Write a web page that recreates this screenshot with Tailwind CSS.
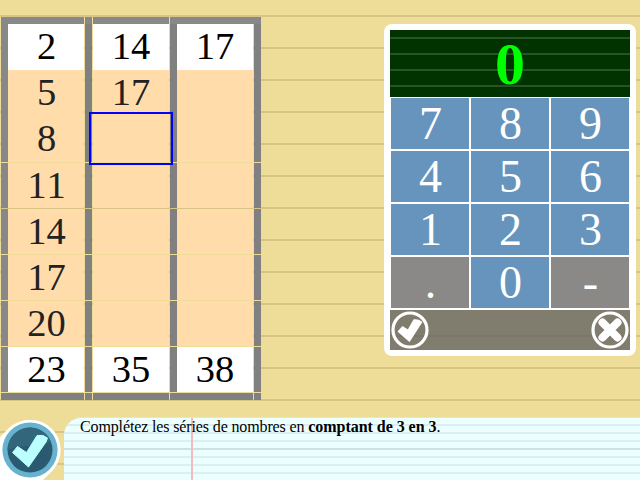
<!DOCTYPE html>
<html lang="fr">
<head>
<meta charset="utf-8">
<title>Séries de nombres</title>
<script src="https://cdn.jsdelivr.net/npm/@tailwindcss/browser@4"></script>
</head>
<body class="w-[640px] h-[480px] overflow-hidden bg-[#eedd99] bg-[repeating-linear-gradient(to_bottom,transparent_0px,transparent_15px,#d8c586_15px,#d8c586_17px,transparent_17px,transparent_32px)] font-['Liberation_Serif',serif] [font-kerning:none]">
<div class="relative w-[640px] h-[480px] flex flex-col">
  <main class="h-[417px] flex justify-between">
    <div id="grid" class="mt-[17px] ml-px flex flex-col w-[260px] text-[38.500px] leading-[45px] text-center">
      <div class="flex h-[7px]"><div class="w-[83px] bg-[#888]"></div><div class="ml-px w-[7px] bg-[#888]"></div><div class="ml-px w-[76px] bg-[#888]"></div><div class="ml-px w-[83px] bg-[#888]"></div><div class="w-[8px] bg-[#888]"></div></div>
    </div>
    <section class="mt-6 mr-1 w-[252px] h-[332px] p-1.5 rounded-lg bg-white flex flex-col">
      <div class="h-[67px] bg-[#003300] bg-[repeating-linear-gradient(to_bottom,transparent_0px,transparent_7px,#285228_7px,#285228_9px,transparent_9px,transparent_16px)] text-[#00ff00] font-bold text-[60px] leading-[69px] text-center">0</div>
      <div id="keys" class="mt-px px-px grid grid-cols-3 gap-0.5 text-white text-[46px] leading-[52px] text-center"></div>
      <div class="mt-0.5 h-10 px-px bg-[#807c6e] bg-[linear-gradient(to_bottom,transparent_25px,#7b7768_25px,#7b7768_27px,transparent_27px)] flex justify-between items-center">
        <svg class="size-[38px]" viewBox="0 0 38 38"><circle cx="19" cy="19" r="17" fill="none" stroke="#fff" stroke-width="3.200"/><path d="M7.500 20.500L11.500 16L17 19.500L23 9Q27 8.500 30.500 11L18.300 30z" fill="#fff" stroke="#fff" stroke-width="1.500" stroke-linejoin="round"/></svg>
        <svg class="size-[38px]" viewBox="0 0 38 38"><circle cx="19" cy="19" r="17" fill="none" stroke="#fff" stroke-width="3.200"/><path d="M11.500 11.500l15 15M26.500 11.500l-15 15" stroke="#fff" stroke-width="8" stroke-linecap="round"/></svg>
      </div>
    </section>
  </main>
  <footer class="flex h-[63px]">
    <svg class="w-16 h-[63px] shrink-0" viewBox="0 417 64 63"><path d="M0 437L9 428Q18 420 30 420A30 30 0 0 1 52 471L43 480H0z" fill="#fff"/><circle cx="30" cy="450" r="30" fill="#fff"/><circle cx="30" cy="450" r="27.600" fill="#66b2cf"/><circle cx="30" cy="450" r="22.500" fill="#295a70"/><path d="M7.500 450A22.500 22.500 0 0 1 51 442Q40 445 28 446T7.500 450z" fill="#31667b"/><path d="M12.500 452.500L17.500 446.500L26.500 452.500L37 435.500Q43 434 47.500 438L46 442L28.500 467z" fill="#bff" stroke="#bff" stroke-linejoin="round"/></svg>
    <div class="relative flex-1 rounded-tl-[18px] overflow-hidden border-t border-[#dde8d8] bg-[#ecffff] bg-[repeating-linear-gradient(to_bottom,transparent_0px,transparent_6px,#dbeef2_6px,#dbeef2_8px)]">
      <div class="absolute left-0 right-0 top-[30px] h-0.5 bg-[#cfe0e2]"></div>
      <div class="absolute left-[127px] top-0 bottom-0 w-0.5 bg-[#f5bcbe]"></div>
      <p class="relative pl-4 text-[16px] leading-[18px] text-black tracking-[-0.130px]">Complétez les séries de nombres en <b class="tracking-[-0.040px]">comptant de 3 en 3</b>.</p>
    </div>
  </footer>
  <div class="absolute left-[89px] top-[112px] w-[84px] h-[53px] border-2 border-[#0000ff]"></div>
</div>
<script>
const rows = [[2,14,17],[5,17,''],[8,'',''],[11,'',''],[14,'',''],[17,'',''],[20,'',''],[23,35,38]];
document.getElementById('grid').insertAdjacentHTML('beforeend', rows.map((r, i) => {
  const h = i < 3 ? 'h-[46px]' : 'h-[45px] mt-px';
  const c = i === 0 || i === 7 ? 'bg-white text-black' : 'bg-[#ffdcaa] text-[#222]';
  return `<div class="flex ${h}"><div class="w-[7px] bg-[#888]"></div><div class="w-[76px] pl-px ${c}">${r[0]}</div><div class="ml-px w-[7px] bg-[#808080]"></div><div class="ml-px w-[76px] ${c}">${r[1]}</div><div class="ml-px w-[7px] bg-[#808080]"></div><div class="w-[76px] ${c}">${r[2]}</div><div class="ml-px w-[7px] bg-[#808080]"></div></div>`;
}).join('') + '<div class="flex h-[7px] mt-px"><div class="w-[83px] bg-[#808080]"></div><div class="ml-px w-[7px] bg-[#808080]"></div><div class="ml-px w-[76px] bg-[#808080]"></div><div class="ml-px w-[83px] bg-[#808080]"></div><div class="ml-px w-[7px] bg-[#808080]"></div></div>');
document.getElementById('keys').innerHTML = [...'789456123.0-'].map(k =>
  `<div class="h-[51px] pl-px ${k === '.' || k === '-' ? 'bg-[#8b8987]' : 'bg-[#6694bd]'}">${k}</div>`).join('');
</script>
</body>
</html>
